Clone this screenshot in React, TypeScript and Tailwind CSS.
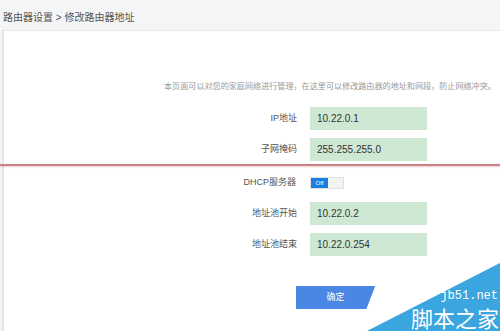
import React from 'react';

const font = { fontFamily: '"Liberation Sans", "Noto Sans CJK SC", sans-serif' };

function Field({ label, value }: { label: string; value: string }) {
  return (
    <div className="flex items-center h-[23px]">
      <div className="w-[96px] text-right text-[9px] text-[#555] pr-[13px]">{label}</div>
      <div className="w-[117px] h-[23px] bg-[#cfe8d3] flex items-center pl-[7px] text-[10px] text-[#333]">
        {value}
      </div>
    </div>
  );
}

export default function App() {
  return (
    <div className="w-[500px] h-[331px] overflow-hidden relative bg-[#f4f5f6]" style={font}>
      <div className="h-[30px] flex items-center pl-[3px] pt-[4px] text-[10px] text-[#555]">
        路由器设置 &gt; 修改路由器地址
      </div>
      <div className="ml-[2px] h-[301px] bg-white border-l-[2px] border-[#e3e4e6] border-t border-t-[#e8e9eb]">
        <div className="pt-[50px] pl-[160px] text-[8.1px] text-[#999] whitespace-nowrap h-[62px]">
          本页面可以对您的家庭网络进行管理，在这里可以修改路由器的地址和网段，防止网络冲突。
        </div>
        <div className="pl-[210px] pt-[14px] flex flex-col gap-[8px]">
          <Field label="IP地址" value="10.22.0.1" />
          <Field label="子网掩码" value="255.255.255.0" />
        </div>
        <div className="-ml-[4px] mt-[3px] h-[2px] bg-[#c98288] shadow-[0_1px_2px_rgba(200,120,128,0.4)]" />
        <div className="pl-[210px] pt-[11px] flex flex-col">
          <div className="flex items-center h-[12px]">
            <div className="w-[96px] text-right text-[9px] text-[#555] pr-[14px]">DHCP服务器</div>
            <div className="flex h-[12px] w-[34px] border border-[#e2e2e2]">
              <div className="w-[17px] bg-[#1a7fe0] text-white text-[6px] flex items-center justify-center">Off</div>
              <div className="flex-1 bg-[#f3f3f3]" />
            </div>
          </div>
          <div className="flex flex-col gap-[8px] mt-[13px]">
            <Field label="地址池开始" value="10.22.0.2" />
            <Field label="地址池结束" value="10.22.0.254" />
          </div>
          <div className="mt-[30px] ml-[82px] w-[79px] h-[23px] bg-[#4a86e3] text-white text-[9px] flex items-center justify-center">
            确定
          </div>
        </div>
      </div>
      <svg className="absolute left-0 top-0" width="500" height="331" viewBox="0 0 500 331">
        <polygon points="366,310 376,284 500,228 500,331 356,331" fill="#ffffff" />
        <polygon points="367,331 500,263 500,331" fill="#3aa5de" />
      </svg>
      <div className="absolute right-[2px] top-[290px] text-white text-[12px] leading-[12px]" style={{ fontFamily: '"Liberation Mono", monospace' }}>
        jb51.net
      </div>
      <div className="absolute right-[1px] top-[306px] text-white text-[22px] leading-[22px]" style={{ fontFamily: '"Noto Sans CJK SC", sans-serif' }}>
        脚本之家
      </div>
    </div>
  );
}
